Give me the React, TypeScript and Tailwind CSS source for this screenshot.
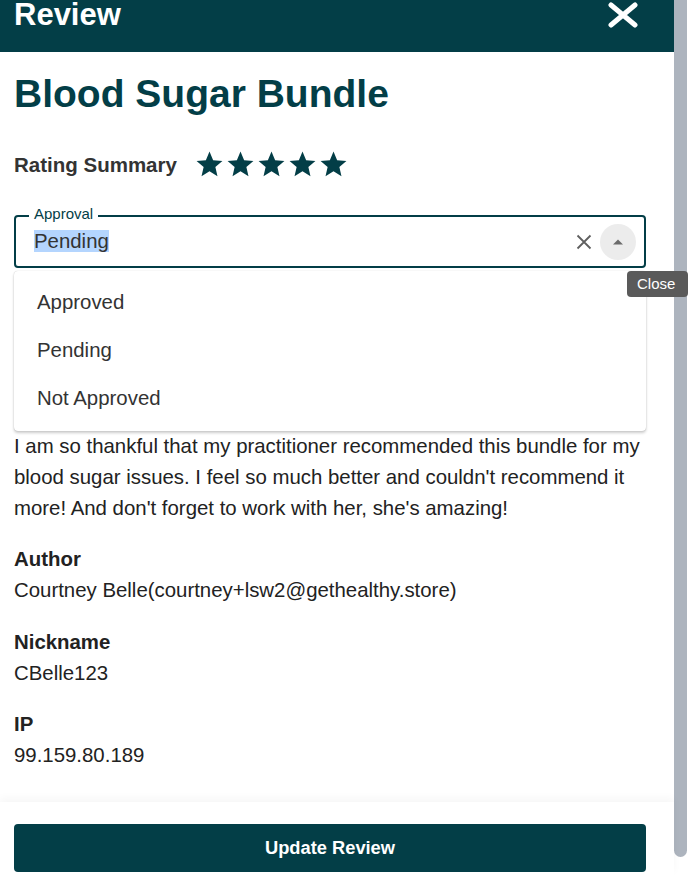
import React from "react";

const TEAL = "#033e47";

function Star() {
  return (
    <svg width="31" height="31" viewBox="0 0 24 24" fill={TEAL}>
      <path d="M12 17.27 18.18 21l-1.64-7.03L22 9.24l-7.19-.61L12 2 9.19 8.63 2 9.24l5.46 4.73L5.82 21z" />
    </svg>
  );
}

function Field({ label, value, mt }: { label: string; value: string; mt: string }) {
  return (
    <div className={mt}>
      <div className="text-[20.4px] leading-[31px] font-bold text-[#222]">{label}</div>
      <div className="text-[20.4px] leading-[31px] text-[#222]">{value}</div>
    </div>
  );
}

export default function App() {
  return (
    <div className="relative flex w-[688px] h-[876px] overflow-hidden bg-white font-['Liberation_Sans',Arial,sans-serif]">
      <div className="flex flex-col w-[674px] h-full">
        <div className="h-[52px] shrink-0 bg-[#033e47] flex justify-between items-start pl-[14px] pr-[36px]">
          <h2 className="text-[31px] leading-[30px] font-bold text-white">Review</h2>
          <svg width="30" height="26" viewBox="0 0 30 26" className="mt-[1.5px]">
            <path d="M3 3 L27 23 M27 3 L3 23" stroke="white" strokeWidth="5" strokeLinecap="round" fill="none" />
          </svg>
        </div>

        <div className="flex-1 overflow-hidden pl-[14px] pr-[28px]">
          <h1 className="mt-[18px] text-[39px] leading-[48px] font-bold text-[#033e47]">Blood Sugar Bundle</h1>

          <div className="mt-[31px] flex items-center h-[31px]">
            <span className="text-[20.5px] leading-[23px] font-bold text-[#333]">Rating Summary</span>
            <div className="ml-[17px] flex">
              <Star />
              <Star />
              <Star />
              <Star />
              <Star />
            </div>
          </div>

          <div className="relative mt-[25.5px]">
            <fieldset className="m-0 border-2 border-[#033e47] rounded-[4px] pl-[13px] pr-[8px] pt-0 pb-[8px]">
              <legend className="px-[5px] pb-[5px] text-[15px] leading-[16px] text-[#033e47]">Approval</legend>
              <div className="flex items-center h-[31px] pl-[5px]">
                <div className="flex-1">
                  <span className="bg-[#b4d5fe] text-[20.4px] leading-[23px] text-[#333]">Pending</span>
                </div>
                <div className="w-[28px] h-[28px] flex items-center justify-center">
                  <svg width="16" height="16" viewBox="0 0 16 16">
                    <path d="M1.5 1.5 L14.5 14.5 M14.5 1.5 L1.5 14.5" stroke="#5f5f5f" strokeWidth="1.8" fill="none" />
                  </svg>
                </div>
                <div className="ml-[2px] w-[36px] h-[36px] shrink-0 rounded-full bg-[#ececec] flex items-center justify-center">
                  <svg width="12" height="8" viewBox="0 0 12 8">
                    <path d="M1 6.5 L6 1.5 L11 6.5 Z" fill="#6b6b6b" />
                  </svg>
                </div>
              </div>
            </fieldset>

            <div className="absolute z-10 left-0 right-0 top-[calc(100%+3px)] bg-white rounded-[4px] py-[8px] shadow-[0_2px_3px_rgba(0,0,0,0.2),0_0_1px_rgba(0,0,0,0.25)]">
              <div className="h-[48px] flex items-center pl-[23px] text-[20.4px] text-[#333]">Approved</div>
              <div className="h-[48px] flex items-center pl-[23px] text-[20.4px] text-[#333]">Pending</div>
              <div className="h-[48px] flex items-center pl-[23px] text-[20.4px] text-[#333]">Not Approved</div>
            </div>
          </div>

          <p className="mt-[163px] text-[20.4px] leading-[31px] text-[#222]">
            I am so thankful that my practitioner recommended this bundle for my blood sugar issues. I feel so much better and couldn't recommend it more! And don't forget to work with her, she's amazing!
          </p>

          <Field mt="mt-[20px]" label="Author" value="Courtney Belle(courtney+lsw2@gethealthy.store)" />
          <Field mt="mt-[21px]" label="Nickname" value="CBelle123" />
          <Field mt="mt-[20px]" label="IP" value="99.159.80.189" />
        </div>

        <div className="relative shrink-0 h-[74px] pt-[22px] pl-[14px] pr-[28px] bg-white shadow-[0_-4px_8px_rgba(0,0,0,0.035)]">
          <button className="w-full h-[48px] bg-[#033e47] rounded-[4px] text-white font-bold text-[18.3px]">Update Review</button>
        </div>
      </div>

      <div className="w-[14px] h-full bg-white">
        <div className="w-[13px] h-[857px] bg-[#adb4be] rounded-b-full" />
      </div>

      <div className="absolute z-20 left-[627px] top-[271px] h-[26px] w-[61px] rounded-[4px] bg-[#5a5a5a] flex items-center pl-[10px] text-[15px] text-white">
        Close
      </div>
    </div>
  );
}
